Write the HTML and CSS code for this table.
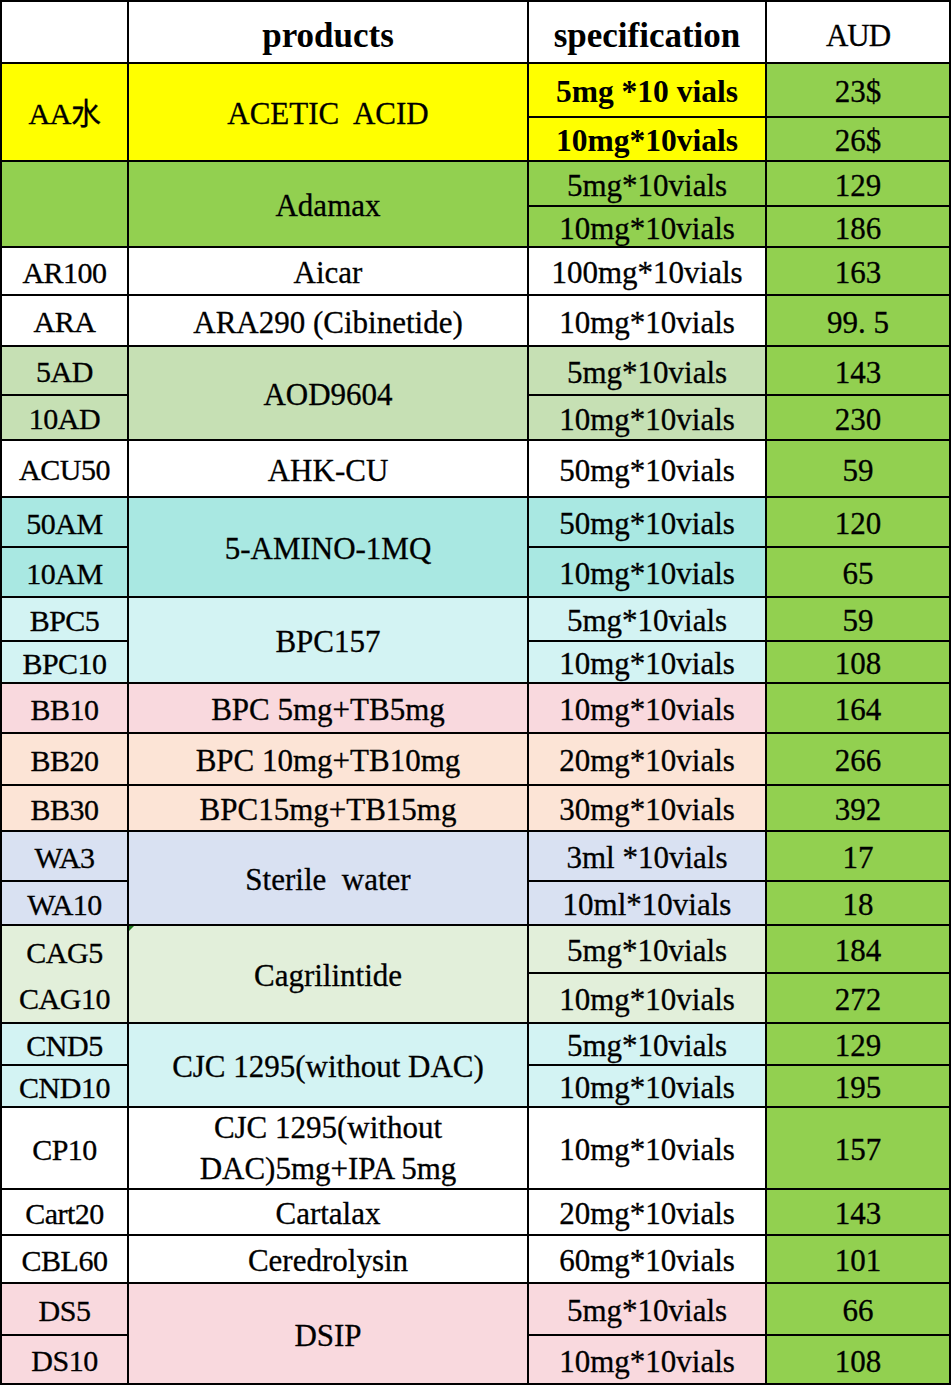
FILE: index.html
```html
<!DOCTYPE html>
<html lang="en">
<head>
<meta charset="utf-8">
<title>Price list</title>
<link rel="stylesheet" href="styles.css">
</head>
<body>
<div class="sheet">
  <div class="c code white"></div>
  <div class="c name head white">products</div>
  <div class="c spec head white">specification</div>
  <div class="c aud narrow white">AUD</div>

  <div class="c code yellow span2">AA水</div>
  <div class="c name yellow span2 pre">ACETIC  ACID</div>
  <div class="c spec bold yellow">5mg *10 vials</div>
  <div class="c aud green">23$</div>
  <div class="c spec bold yellow">10mg*10vials</div>
  <div class="c aud green">26$</div>

  <div class="c code green span2"></div>
  <div class="c name green span2">Adamax</div>
  <div class="c spec green">5mg*10vials</div>
  <div class="c aud green">129</div>
  <div class="c spec green">10mg*10vials</div>
  <div class="c aud green">186</div>

  <div class="c code white">AR100</div>
  <div class="c name white">Aicar</div>
  <div class="c spec white">100mg*10vials</div>
  <div class="c aud green">163</div>

  <div class="c code white">ARA</div>
  <div class="c name white">ARA290 (Cibinetide)</div>
  <div class="c spec white">10mg*10vials</div>
  <div class="c aud green">99. 5</div>

  <div class="c code sage">5AD</div>
  <div class="c name sage span2">AOD9604</div>
  <div class="c spec sage">5mg*10vials</div>
  <div class="c aud green">143</div>
  <div class="c code sage">10AD</div>
  <div class="c spec sage">10mg*10vials</div>
  <div class="c aud green">230</div>

  <div class="c code white">ACU50</div>
  <div class="c name white">AHK-CU</div>
  <div class="c spec white">50mg*10vials</div>
  <div class="c aud green">59</div>

  <div class="c code teal">50AM</div>
  <div class="c name teal span2">5-AMINO-1MQ</div>
  <div class="c spec teal">50mg*10vials</div>
  <div class="c aud green">120</div>
  <div class="c code teal">10AM</div>
  <div class="c spec teal">10mg*10vials</div>
  <div class="c aud green">65</div>

  <div class="c code aqua">BPC5</div>
  <div class="c name aqua span2">BPC157</div>
  <div class="c spec aqua">5mg*10vials</div>
  <div class="c aud green">59</div>
  <div class="c code aqua">BPC10</div>
  <div class="c spec aqua">10mg*10vials</div>
  <div class="c aud green">108</div>

  <div class="c code pink">BB10</div>
  <div class="c name pink">BPC 5mg+TB5mg</div>
  <div class="c spec pink">10mg*10vials</div>
  <div class="c aud green">164</div>

  <div class="c code peach">BB20</div>
  <div class="c name peach">BPC 10mg+TB10mg</div>
  <div class="c spec peach">20mg*10vials</div>
  <div class="c aud green">266</div>

  <div class="c code peach">BB30</div>
  <div class="c name peach">BPC15mg+TB15mg</div>
  <div class="c spec peach">30mg*10vials</div>
  <div class="c aud green">392</div>

  <div class="c code lav">WA3</div>
  <div class="c name lav span2 pre">Sterile  water</div>
  <div class="c spec lav">3ml *10vials</div>
  <div class="c aud green">17</div>
  <div class="c code lav">WA10</div>
  <div class="c spec lav">10ml*10vials</div>
  <div class="c aud green">18</div>

  <div class="c code mint span2 pair"><span>CAG5</span><span>CAG10</span></div>
  <div class="c name mint span2 flagged">Cagrilintide</div>
  <div class="c spec mint">5mg*10vials</div>
  <div class="c aud green">184</div>
  <div class="c spec mint">10mg*10vials</div>
  <div class="c aud green">272</div>

  <div class="c code aqua">CND5</div>
  <div class="c name aqua span2">CJC 1295(without DAC)</div>
  <div class="c spec aqua">5mg*10vials</div>
  <div class="c aud green">129</div>
  <div class="c code aqua">CND10</div>
  <div class="c spec aqua">10mg*10vials</div>
  <div class="c aud green">195</div>

  <div class="c code white">CP10</div>
  <div class="c name white two">CJC 1295(without<br>DAC)5mg+IPA 5mg</div>
  <div class="c spec white">10mg*10vials</div>
  <div class="c aud green">157</div>

  <div class="c code white">Cart20</div>
  <div class="c name white">Cartalax</div>
  <div class="c spec white">20mg*10vials</div>
  <div class="c aud green">143</div>

  <div class="c code white">CBL60</div>
  <div class="c name white">Ceredrolysin</div>
  <div class="c spec white">60mg*10vials</div>
  <div class="c aud green">101</div>

  <div class="c code pink">DS5</div>
  <div class="c name pink span2">DSIP</div>
  <div class="c spec pink">5mg*10vials</div>
  <div class="c aud green">66</div>
  <div class="c code pink">DS10</div>
  <div class="c spec pink">10mg*10vials</div>
  <div class="c aud green">108</div>
</div>
</body>
</html>
```

FILE: styles.css
```css
html, body {
  margin: 0;
  padding: 0;
  background: #ffffff;
}

.sheet {
  display: grid;
  width: max-content;
  grid-template-columns: 125px 398px 236px 182px;
  grid-template-rows:
    60px 52px 42px 43px 39px 46px 49px 47px 43px 55px
    48px 48px 42px 40px 48px 50px 44px 48px 42px 46px
    48px 40px 40px 80px 44px 46px 50px 47px;
  gap: 2px;
  padding: 2px;
  background: #000000;
  color: #000000;
}

.c {
  display: flex;
  align-items: center;
  justify-content: center;
  text-align: center;
  font-family: "Liberation Serif", "Times New Roman", "Noto Sans CJK SC", serif;
  font-size: 31px;
  line-height: 1;
  padding-top: 3px;
  box-sizing: border-box;
  white-space: nowrap;
  position: relative;
  -webkit-text-stroke: 0.3px #000;
}

.code {
  font-size: 30px;
  letter-spacing: -0.5px;
}

.narrow {
  font-size: 31px;
  letter-spacing: -1px;
  padding-top: 6px;
}

.head {
  font-weight: bold;
  font-size: 35px;
  padding-top: 6px;
  -webkit-text-stroke: 0;
}

.bold {
  font-weight: bold;
  font-size: 31.5px;
  -webkit-text-stroke: 0;
}

.pre {
  white-space: pre;
}

.span2 {
  grid-row: span 2;
}

.two {
  line-height: 41px;
  white-space: normal;
  padding-top: 0;
}

.pair {
  flex-direction: column;
  justify-content: space-around;
  padding-top: 4px;
}

.flagged::before {
  content: "";
  position: absolute;
  left: 0;
  top: 0;
  border-top: 5px solid #1f7a1f;
  border-right: 5px solid transparent;
}

.white  { background: #ffffff; }
.yellow { background: #ffff00; }
.green  { background: #92d050; }
.sage   { background: #c6e0b4; }
.teal   { background: #a9e8e2; }
.aqua   { background: #d3f3f3; }
.pink   { background: #f9d9de; }
.peach  { background: #fce4d6; }
.lav    { background: #d9e1f2; }
.mint   { background: #e2efda; }
```
